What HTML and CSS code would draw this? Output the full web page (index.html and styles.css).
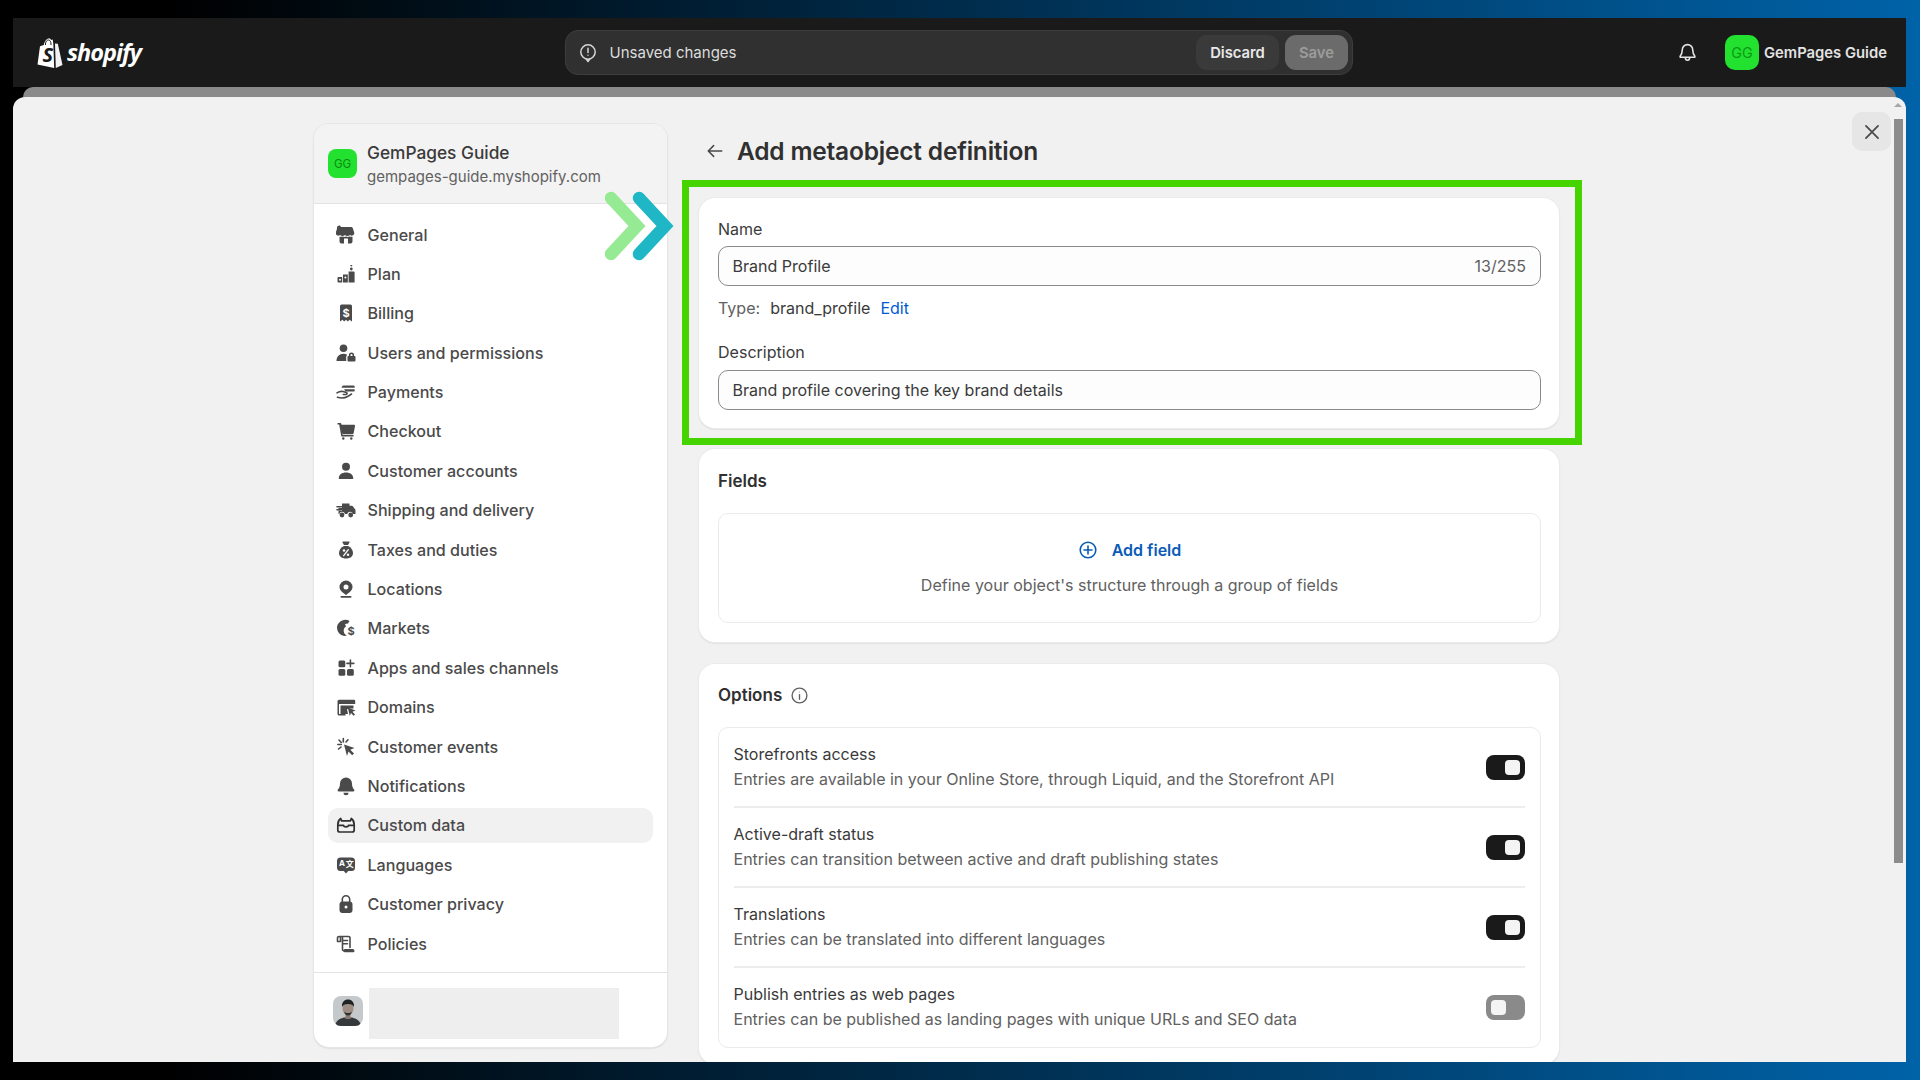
FILE: index.html
```html
<!DOCTYPE html>
<html lang="en">
<head>
<meta charset="utf-8">
<title>Add metaobject definition</title>
<link rel="stylesheet" href="styles.css">
</head>
<body>
<div class="frame">
  <header class="topbar">
    <div class="brand">
      <svg class="bag" viewBox="0 0 26 30"><path class="bag-l" d="M0.500 26.500 3 8.300l3.800-1.200C7.600 3 9.700.6 12 .6c1 0 1.600.5 2 1.300l1.700-.4.600 4.200.9 24.200z"/><path class="bag-h" d="M8.500 7V6c0-2.500 1.500-4 3-4s2.500 1.800 2.500 4v1"/><path class="bag-r" d="M18 5.500l2.800.3 4.700 21.200L18.800 30z"/><text class="bag-s" x="5.500" y="24">S</text></svg>
      <span class="wordmark">shopify</span>
    </div>
    <div class="savebar">
      <svg class="save-icon" viewBox="0 0 20 20"><circle cx="10" cy="9" r="7.200"/><path d="M10 5.200v4.300M8.300 16 10 18.500l1.700-2.500"/><circle class="dot" cx="10" cy="12.300" r=".7"/></svg>
      <span class="save-text">Unsaved changes</span>
      <button class="btn btn-discard">Discard</button>
      <button class="btn btn-save">Save</button>
    </div>
    <div class="account">
      <svg class="bell" viewBox="0 0 20 20"><path d="M10 2.500a5 5 0 0 0-5 5c0 3-.8 4.500-2 6v1h14v-1c-1.200-1.500-2-3-2-6a5 5 0 0 0-5-5zM8 14.500v.8a2 2 0 0 0 4 0v-.8"/></svg>
      <span class="avatar avatar-top">GG</span>
      <span class="account-name">GemPages Guide</span>
    </div>
  </header>
  <div class="sheet-back"></div>
  <main class="modal">
    <button class="close" aria-label="Close"><svg viewBox="0 0 20 20"><path d="M4.500 4.500l11 11M15.500 4.500l-11 11"/></svg></button>
    <div class="scroll-arrow"></div>
    <div class="scroll-thumb"></div>

    <aside class="sidebar">
      <div class="side-head">
        <span class="avatar avatar-side">GG</span>
        <div>
          <div class="store-name">GemPages Guide</div>
          <div class="store-url">gempages-guide.myshopify.com</div>
        </div>
      </div>
      <nav class="nav">
        <a class="nav-item"><svg class="ni" viewBox="0 0 20 20"><path d="M5 2h10a2 2 0 0 1 1.900 1.400l1.300 4a2.600 2.600 0 0 1-4.200 2.600 3.400 3.400 0 0 1-5 0 3.400 3.400 0 0 1-5 0 2.600 2.600 0 0 1-4.200-2.600l1.300-4A2 2 0 0 1 5 2z"/><path fill-rule="evenodd" d="M3.500 11.700c1 .3 2.100.2 3-.2 1.100.5 2.400.6 3.500 0 1.100.6 2.400.5 3.500 0 .9.400 2 .5 3 .2V16.500a2 2 0 0 1-2 2h-9a2 2 0 0 1-2-2zM8 13.500v5h4v-5z"/></svg>General</a>
        <a class="nav-item"><svg class="ni" viewBox="0 0 20 20"><path d="M1.500 14a1 1 0 0 1 1-1h3.700v5.500H2.500a1 1 0 0 1-1-1zM7 10.500h4.800v8H7zM12.600 7.500h5a1 1 0 0 1 1 1v10h-6z"/><circle class="cut" cx="4" cy="15.800" r="1"/><circle class="cut" cx="9.400" cy="13.500" r="1"/><circle cx="15.300" cy="5" r="1.400"/><path d="M14 1h2.600l-1.300 1.800z"/></svg>Plan</a>
        <a class="nav-item"><svg class="ni" viewBox="0 0 20 20"><path d="M5.500 1.500h9a1.500 1.500 0 0 1 1.500 1.500v15.500l-2.500-1.800L11.800 18.500 10 16.700l-1.800 1.800-1.700-1.800L4 18.500V3a1.500 1.500 0 0 1 1.500-1.500z"/><text class="gl-w" x="10" y="13.800" font-size="11">$</text></svg>Billing</a>
        <a class="nav-item"><svg class="ni" viewBox="0 0 20 20"><circle cx="7.500" cy="5.300" r="3.800"/><path d="M.5 18c0-4.300 2.800-7.200 7-7.200 1.400 0 2.700.3 3.700 1-.6.600-1 1.500-1 2.500V18z"/><rect x="11.500" y="13" width="8" height="5.500" rx="1"/><path class="ln" d="M13.700 13v-1a1.800 1.800 0 0 1 3.600 0v1"/></svg>Users and permissions</a>
        <a class="nav-item"><svg class="ni" viewBox="0 0 20 20"><path d="M7.500 3.500h10a1.200 1.200 0 0 1 1.200 1.200v1.100H5.500c.3-1.300 1-2.300 2-2.300zM8 7.200h10.700v1.200A1.200 1.200 0 0 1 17.500 9.600H9.500z"/><path class="ln" d="M1 10.800c2-1.300 4-1.700 6-1.300l3.500 1.100c1 .5.500 1.900-.7 1.900H7.300M1.500 15.300c4 1.300 7.500.8 10.500-1l3.500-2.300"/></svg>Payments</a>
        <a class="nav-item"><svg class="ni" viewBox="0 0 20 20"><path d="M1.500 2h2.800c.6 0 1 .4 1.100 1l.1.800H18a1 1 0 0 1 1 1.200l-1.300 7a1.500 1.500 0 0 1-1.500 1.200H6.500L4 3.500H1.500z"/><path class="ln" d="M4 3.500 6 14.800h11"/><circle cx="7.300" cy="17.500" r="1.200"/><circle cx="15.300" cy="17.500" r="1.200"/></svg>Checkout</a>
        <a class="nav-item"><svg class="ni" viewBox="0 0 20 20"><circle cx="10" cy="5.800" r="4"/><path d="M2.800 18v-.7c0-3.700 3.200-5.800 7.200-5.800s7.200 2.100 7.200 5.800v.7z"/></svg>Customer accounts</a>
        <a class="nav-item"><svg class="ni" viewBox="0 0 20 20"><path d="M6 3.500h7.500v2.200h2.300c.4 0 .8.200 1 .5l2.400 3.300c.2.200.3.500.3.800v3.700h-2.500a3 3 0 0 0-5.800 0H9a3 3 0 0 0-5.800 0H2.500v-3.500H6V10H2.500V8H6z"/><circle cx="6" cy="15" r="2.400"/><circle cx="14.700" cy="15" r="2.400"/><path class="ln" d="M1 6.700h4.500M1 9.700h3"/></svg>Shipping and delivery</a>
        <a class="nav-item"><svg class="ni" viewBox="0 0 20 20"><path d="M7 1.500h6a.6.600 0 0 1 .5.900L12 5H8L6.500 2.400A.6.600 0 0 1 7 1.500z"/><path d="M8 6h4c3.200 1.500 5 4.200 5 7 0 3.300-2.700 5.500-7 5.500S3 16.300 3 13c0-2.800 1.800-5.500 5-7z"/><path class="ln-w" d="M12.300 9.700l-4.600 6"/><circle class="cut" cx="8" cy="10.500" r="1.200"/><circle class="cut" cx="12" cy="14.700" r="1.200"/></svg>Taxes and duties</a>
        <a class="nav-item"><svg class="ni" viewBox="0 0 20 20"><path fill-rule="evenodd" d="M10 1.500a6.500 6.500 0 0 1 6.500 6.500c0 3-3 5.500-6.500 8-3.500-2.500-6.500-5-6.500-8A6.500 6.500 0 0 1 10 1.500zM10 5.500a2.500 2.500 0 1 0 0 5 2.500 2.500 0 0 0 0-5z"/><rect x="4.500" y="17" width="11" height="1.700" rx=".8"/></svg>Locations</a>
        <a class="nav-item"><svg class="ni" viewBox="0 0 20 20"><path d="M9.500 1.800c1.500 0 2.900.4 4 1.200l-1.500 2.500-3 .5 1 2.500c-1.500 1-2.300 2.500-2.300 4.300 0 1.800.9 3.300 2.300 4.300l1 .5c-.8.200-1.600.3-2.500.3A8.200 8.200 0 0 1 1 10c0-4.500 3.800-8.200 8.500-8.200z"/><text class="gl" x="15" y="17" font-size="11">$</text></svg>Markets</a>
        <a class="nav-item"><svg class="ni" viewBox="0 0 20 20"><rect x="2.500" y="2.500" width="6.800" height="6.800" rx="1.500"/><rect x="2.500" y="11" width="6.800" height="6.800" rx="1.500"/><rect x="11" y="11" width="6.800" height="6.800" rx="1.500"/><path class="ln" d="M14.400 2v6.800M11 5.400h6.800"/></svg>Apps and sales channels</a>
        <a class="nav-item"><svg class="ni" viewBox="0 0 20 20"><path d="M3 2.800h15a1.200 1.200 0 0 1 1.200 1.200v3H1.500V4.300A1.500 1.500 0 0 1 3 2.800z"/><path d="M1.500 7h1.500v10h6.500v1.500H3A1.500 1.500 0 0 1 1.500 17z"/><path d="M4.500 8.500h13v3h-5l-1.500 1 1 4.500H4.500z"/><path d="M11.800 10.500l7.700 3-3 1.200 2.500 2.800-1.300 1.300-2.700-2.800-1.200 3z"/></svg>Domains</a>
        <a class="nav-item"><svg class="ni" viewBox="0 0 20 20"><path d="M8 7.500l10.500 3.500-4.200 1.700 3.700 3.700-1.800 1.800-3.700-3.700-1.500 4.500z"/><path class="ln" d="M7.300 1.500v3.500M1.800 7.500h3.500M3 3l2.300 2.500M12 2.800 10 5M2.500 12l2.500-2"/></svg>Customer events</a>
        <a class="nav-item"><svg class="ni" viewBox="0 0 20 20"><path d="M10 1.500a6 6 0 0 0-6 6c0 3-.7 4.500-2.300 6.300-.3.700 0 1.700 1 1.700h14.600c1 0 1.300-1 1-1.700C16.700 12 16 10.500 16 7.500a6 6 0 0 0-6-6z"/><path d="M7.500 16.800a2.500 2.500 0 0 0 5 0z"/></svg>Notifications</a>
        <a class="nav-item active"><svg class="ni ni-o" viewBox="0 0 20 20"><path d="M1.800 9.800V15A2 2 0 0 0 3.800 17h12.400a2 2 0 0 0 2-2V9.800c0-3-1.100-5.100-2.900-6.300L14.300 5.800H5.700L4.700 3.500C2.900 4.700 1.800 6.800 1.800 9.800z"/><path d="M1.800 10.300h5.700c0 1 .9 1.500 2.500 1.500s2.500-.5 2.500-1.500h5.700"/></svg>Custom data</a>
        <a class="nav-item"><svg class="ni" viewBox="0 0 20 20"><path d="M4.500 2.500h11a3.500 3.500 0 0 1 3.500 3.500v6.500a3.500 3.500 0 0 1-3.500 3.500h-3.300L10 18.500 7.800 16H4.500A3.500 3.500 0 0 1 1 12.500V6a3.500 3.500 0 0 1 3.500-3.500z"/><text class="gl-w" x="6" y="11.300" font-size="8">A</text><text class="gl-w gl-cjk" x="13.700" y="12" font-size="8">文</text></svg>Languages</a>
        <a class="nav-item"><svg class="ni" viewBox="0 0 20 20"><rect x="3.500" y="7.500" width="13" height="11.500" rx="3"/><path class="ln" d="M6.300 8V5.500a3.700 3.700 0 0 1 7.400 0V8"/><circle class="cut" cx="10" cy="13" r="1.500"/></svg>Customer privacy</a>
        <a class="nav-item"><svg class="ni" viewBox="0 0 20 20"><path class="ln" d="M1.500 7.500V4A1.500 1.500 0 0 1 3 2.500h9.500A1.500 1.500 0 0 1 14 4v9.500M3 2.500A1.500 1.500 0 0 1 4.500 4v3.500h-3M6.500 2.500V15a2 2 0 0 0 2 2M6.500 6.500h5M6.500 9.800h5"/><path d="M8.500 15h8a2 2 0 0 1 2 2 1.300 1.300 0 0 1-1.300 1.300H8.500c-.6-.4-1-1-1-1.700 0-.6.400-1.200 1-1.600z"/></svg>Policies</a>
      </nav>
      <div class="side-foot">
        <svg class="photo" viewBox="0 0 30 30"><rect width="30" height="30" fill="#c6c9cb"/><path d="M2 30c1-6 5-7.500 9-8.500h8c4 1 8 2.500 9 8.500z" fill="#35393c"/><rect x="12.500" y="17" width="5" height="6" fill="#8a7a70"/><ellipse cx="15" cy="12.500" rx="5.500" ry="6.800" fill="#9d8d82"/><path d="M9 11c-.5-5 2.500-7.500 6-7.500s6.500 2.500 6 7.500c-1-2-2.500-3-6-3s-5 1-6 3z" fill="#202325"/><path d="M11 15.500c1 3 2.500 4 4 4s3-1 4-4c-1 1-2.500 1.500-4 1.500s-3-.5-4-1.500z" fill="#2d2f30"/></svg>
        <div class="blank"></div>
      </div>
    </aside>

    <div class="content">
      <div class="page-head">
        <svg class="back" viewBox="0 0 20 20"><path d="M17.500 10h-15M8.500 4l-6 6 6 6"/></svg>
        <h1>Add metaobject definition</h1>
      </div>

      <section class="card card-name">
        <label class="label">Name</label>
        <div class="input"><span>Brand Profile</span><span class="count">13/255</span></div>
        <div class="type"><span class="muted">Type:</span><span>brand_profile</span><a class="link">Edit</a></div>
        <label class="label label-desc">Description</label>
        <div class="input"><span>Brand profile covering the key brand details</span></div>
        <div class="highlight"></div>
      </section>

      <section class="card card-fields">
        <h2>Fields</h2>
        <div class="empty">
          <div class="add"><svg viewBox="0 0 20 20"><circle cx="10" cy="10" r="7.800"/><path d="M10 6v8M6 10h8"/></svg>Add field</div>
          <p>Define your object's structure through a group of fields</p>
        </div>
      </section>

      <section class="card card-options">
        <h2 class="options-title">Options<svg viewBox="0 0 20 20"><circle cx="10" cy="10" r="7.800"/><path d="M10 9v5"/><circle class="dot" cx="10" cy="6.300" r=".5"/></svg></h2>
        <div class="options">
          <div class="option">
            <div><div class="opt-title">Storefronts access</div><div class="opt-desc">Entries are available in your Online Store, through Liquid, and the Storefront API</div></div>
            <span class="toggle on"></span>
          </div>
          <div class="option">
            <div><div class="opt-title">Active-draft status</div><div class="opt-desc">Entries can transition between active and draft publishing states</div></div>
            <span class="toggle on"></span>
          </div>
          <div class="option">
            <div><div class="opt-title">Translations</div><div class="opt-desc">Entries can be translated into different languages</div></div>
            <span class="toggle on"></span>
          </div>
          <div class="option">
            <div><div class="opt-title">Publish entries as web pages</div><div class="opt-desc">Entries can be published as landing pages with unique URLs and SEO data</div></div>
            <span class="toggle"></span>
          </div>
        </div>
      </section>
    </div>

    <svg class="chevrons" viewBox="0 0 76 72"><path class="chev-g" d="M6 8 32 36 6 64"/><path class="chev-t" d="M34 8 60 36 34 64"/></svg>
  </main>
</div>
</body>
</html>
```
FILE: styles.css
```css
* { box-sizing: border-box; }
html, body { margin: 0; height: 1080px; overflow: hidden; }
body {
  font-family: Inter, "Liberation Sans", sans-serif;
  font-size: 16.05px;
  color: #3a3a3a;
  background: linear-gradient(90deg, #000 0, #000 170px, #0062a8 1920px);
}
.frame {
  height: 1080px;
  padding: 18px 14px 18px 13px;
  display: flex;
  flex-direction: column;
}

/* Top bar */
.topbar {
  height: 69px;
  flex: none;
  background: #1a1a1a;
  display: grid;
  grid-template-columns: 552px 788px 1fr;
  align-items: center;
}
.brand { display: flex; align-items: center; padding-left: 24px; gap: 4px; }
.bag { width: 26px; height: 30px; }
.bag-l { fill: #fff; }
.bag-r { fill: #f2f2f2; }
.bag-h { fill: none; stroke: #1a1a1a; stroke-width: 1; }
.bag-s { font: italic 700 20px "Open Sans", sans-serif; fill: #1a1a1a; }
.wordmark { font: italic 700 23.5px "Open Sans", sans-serif; color: #fff; letter-spacing: -1px; line-height: 30px; margin-top: -2px; }

.savebar {
  height: 45px;
  background: #303030;
  border: 1px solid #3d3d3d;
  border-radius: 13px;
  display: flex;
  align-items: center;
  padding: 0 4px 0 12px;
}
.save-icon { width: 20px; height: 20px; fill: none; stroke: #d6d6d6; stroke-width: 1.500; stroke-linecap: round; stroke-linejoin: round; }
.save-icon .dot { fill: #d6d6d6; stroke: none; }
.save-text { margin-left: 11.5px; color: #dcdcdc; font-size: 15px; flex: 1; }
.btn { height: 35px; border: 0; border-radius: 11px; font-family: inherit; font-size: 14.8px; font-weight: 600; }
.btn-discard { width: 83px; background: #3a3a3a; color: #e8e8e8; }
.btn-save { width: 63px; margin-left: 6px; background: #6b6b6b; color: #9c9c9c; }

.account { display: flex; align-items: center; padding-left: 324px; }
.bell { width: 21px; height: 21px; fill: none; stroke: #e3e3e3; stroke-width: 1.500; stroke-linejoin: round; flex: none; }
.avatar { display: inline-flex; align-items: center; justify-content: center; background: #22e22f; color: #0c9b17; flex: none; }
.avatar-top { width: 34px; height: 35px; border-radius: 10px; margin-left: 27px; font-size: 14.5px; }
.account-name { margin-left: 5px; font-size: 14.8px; font-weight: 600; color: #e3e3e3; white-space: nowrap; }

.sheet-back {
  height: 10px;
  flex: none;
  margin: 0 10px;
  background: #8a8a8a;
  border-radius: 12px 12px 0 0;
}

/* Modal */
.modal {
  position: relative;
  flex: 1;
  min-height: 0;
  overflow: hidden;
  background: #f1f1f1;
  border-radius: 12px 12px 0 0;
  display: grid;
  grid-template-columns: 353px 860px;
  column-gap: 32px;
  align-items: start;
  padding: 27px 0 0 301px;
}
.close {
  position: absolute;
  top: 15px;
  right: 15px;
  width: 39px;
  height: 39px;
  padding: 0;
  border: 0;
  border-radius: 10px;
  background: #e6e6e6;
  display: flex;
  align-items: center;
  justify-content: center;
}
.close svg { width: 22px; height: 22px; fill: none; stroke: #4a4a4a; stroke-width: 1.600; stroke-linecap: round; }
.scroll-thumb { position: absolute; top: 22px; right: 3px; bottom: 199px; width: 9px; background: #8c8c8c; }
.scroll-arrow { position: absolute; top: 6px; right: 4px; width: 0; height: 0; border: 4px solid transparent; border-top: 0; border-bottom: 4px solid #a8a8a8; }

/* Sidebar */
.sidebar {
  height: 923px;
  background: #fff;
  border-radius: 15px;
  box-shadow: 0 0 0 1px #e6e6e6, 0 1px 2px rgba(0,0,0,.22);
  overflow: hidden;
  display: flex;
  flex-direction: column;
}
.side-head {
  height: 80px;
  flex: none;
  background: #f3f3f3;
  border-bottom: 1px solid #e3e3e3;
  display: flex;
  align-items: center;
  gap: 10px;
  padding: 0 14px;
}
.avatar-side { width: 29px; height: 29px; border-radius: 8px; font-size: 11.5px; color: #0a8a14; }
.store-name { font-size: 17.3px; font-weight: 550; line-height: 25px; margin-top: 1px; }
.store-url { font-size: 15px; color: #616161; line-height: 24px; }
.nav { padding: 13px 14px 11px; display: flex; flex-direction: column; gap: 4.4px; }
.nav-item {
  height: 35px;
  flex: none;
  display: flex;
  align-items: center;
  gap: 12px;
  padding-left: 7.5px;
  border-radius: 10px;
  color: #4a4a4a;
  font-size: 16.1px;
  font-weight: 450;
}
.nav-item.active { background: #f1f1f1; }
.ni { width: 20px; height: 20px; flex: none; fill: #4a4a4a; }
.ni .ln { fill: none; stroke: #4a4a4a; stroke-width: 1.600; stroke-linecap: round; stroke-linejoin: round; }
.ni .ln-w { fill: none; stroke: #fff; stroke-width: 1.300; stroke-linecap: round; }
.ni .cut { fill: #fff; }
.ni .gl, .ni .gl-w { font-family: Inter, sans-serif; font-weight: 700; text-anchor: middle; }
.ni .gl { fill: #4a4a4a; }
.ni .gl-w { fill: #fff; }
.ni .gl-cjk { font-family: "Noto Sans CJK SC", sans-serif; }
.ni-o { fill: none; stroke: #303030; stroke-width: 1.700; stroke-linejoin: round; stroke-linecap: round; }
.side-foot { flex: 1; border-top: 1px solid #e3e3e3; padding: 15px 0 0 19px; display: flex; gap: 6px; align-items: flex-start; }
.photo { width: 30px; height: 30px; margin-top: 8px; border-radius: 8px; flex: none; }
.blank { width: 250px; height: 51px; background: #eeeeee; }

/* Content */
.content { position: relative; }
.page-head { height: 74px; display: flex; align-items: center; padding: 0 0 21px 7px; gap: 13px; }
.back { width: 18px; height: 18px; fill: none; stroke: #4a4a4a; stroke-width: 1.700; stroke-linecap: round; stroke-linejoin: round; flex: none; }
h1 { margin: 0; font-size: 24.5px; font-weight: 600; color: #303030; letter-spacing: -.2px; }
.card {
  position: relative;
  background: #fff;
  border-radius: 16px;
  padding: 0 18px 0 19px;
  box-shadow: 0 0 0 1px #ebebeb, 0 1px 2px rgba(0,0,0,.2);
}
.card-name { height: 230px; padding-top: 21px; margin-bottom: 21px; }
.label { display: block; line-height: 20px; height: 27px; color: #3a3a3a; }
.label-desc { margin-top: 13px; line-height: 18px; }
.input {
  height: 40px;
  padding: 0 14px 0 13.5px;
  background: #fdfdfd;
  border: 1px solid #8a8a8a;
  border-radius: 10px;
  display: flex;
  align-items: center;
  justify-content: space-between;
}
.count { color: #616161; }
.type { height: 44px; display: flex; align-items: center; gap: 10px; }
.muted { color: #616161; }
.link { color: #005bd3; }
.highlight {
  position: absolute;
  top: -18px;
  left: -17px;
  right: -23px;
  bottom: -17px;
  border: 7px solid #45d400;
  pointer-events: none;
}
h2 { margin: 0; font-size: 17px; font-weight: 600; line-height: 24px; color: #303030; }
.card-fields { height: 193px; padding-top: 20px; margin-bottom: 22px; }
.empty {
  height: 110px;
  margin-top: 20px;
  border: 1px solid #ebebeb;
  border-radius: 10px;
  display: flex;
  flex-direction: column;
  align-items: center;
  padding-top: 24px;
}
.empty p { margin: 11px 0 0; color: #616161; line-height: 24px; }
.add { display: flex; align-items: center; gap: 14px; height: 24px; color: #0a5bb8; font-weight: 600; }
.add svg { width: 20px; height: 20px; fill: none; stroke: #0a5bb8; stroke-width: 1.600; stroke-linecap: round; }
.card-options { height: 400px; padding-top: 19px; }
.options-title { display: flex; align-items: center; gap: 8px; }
.options-title svg { width: 19px; height: 19px; fill: none; stroke: #616161; stroke-width: 1.400; stroke-linecap: round; }
.options-title .dot { fill: #616161; stroke: none; }
.options {
  margin-top: 20px;
  height: 321px;
  border: 1px solid #ebebeb;
  border-radius: 10px;
  padding: 0 15px 0 14.5px;
}
.option {
  height: 80px;
  display: flex;
  align-items: center;
  justify-content: space-between;
  border-bottom: 2px solid #ededed;
}
.option:last-child { border-bottom-color: transparent; }
.opt-title { line-height: 25px; }
.opt-desc { color: #616161; line-height: 25px; }
.toggle {
  width: 39px;
  height: 25px;
  border-radius: 8px;
  background: #8a8a8a;
  padding: 5px;
  display: flex;
  justify-content: flex-start;
}
.toggle::after { content: ""; width: 15px; height: 15px; border-radius: 4px; background: #f4f4f4; }
.toggle.on { background: #1a1a1a; justify-content: flex-end; }

.chevrons {
  position: absolute;
  left: 592px;
  top: 93px;
  width: 76px;
  height: 72px;
  fill: none;
  stroke-linecap: round;
  stroke-linejoin: miter;
  stroke-width: 12.5px;
}
.chev-g { stroke: #97ea94; }
.chev-t { stroke: #1fb6c6; }
```
